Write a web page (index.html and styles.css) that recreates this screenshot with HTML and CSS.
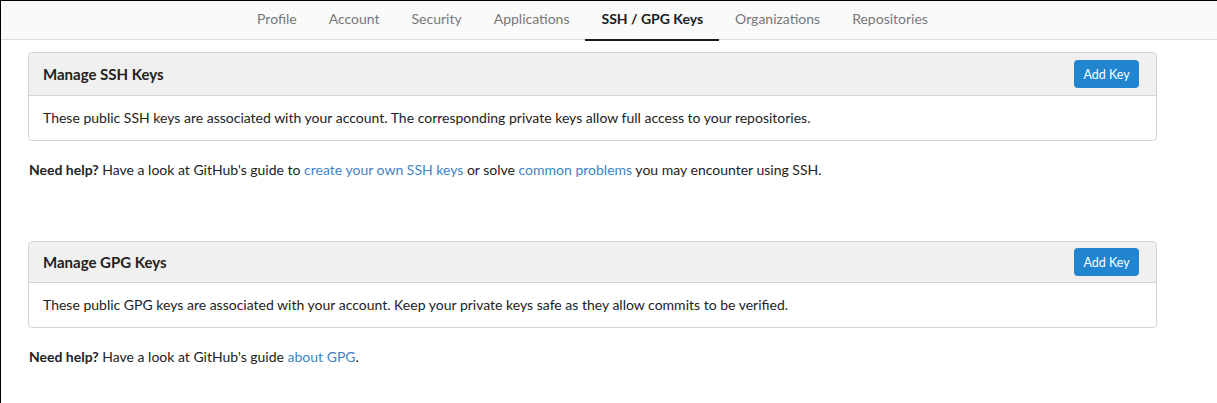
FILE: index.html
```html
<!DOCTYPE html>
<html lang="en">
<head>
<meta charset="utf-8">
<title>SSH / GPG Keys</title>
<link rel="stylesheet" href="styles.css">
</head>
<body>
<nav class="tabs">
  <div class="tabs-inner">
    <a class="tab">Profile</a>
    <a class="tab">Account</a>
    <a class="tab">Security</a>
    <a class="tab">Applications</a>
    <a class="tab active">SSH / GPG Keys</a>
    <a class="tab">Organizations</a>
    <a class="tab">Repositories</a>
  </div>
</nav>
<main class="container">
  <section class="panel panel-first">
    <div class="panel-header">
      <h4 class="panel-title">Manage SSH Keys</h4>
      <button class="btn">Add Key</button>
    </div>
    <div class="panel-body">These public SSH keys are associated with your account. The corresponding private keys allow full access to your repositories.</div>
  </section>
  <p class="help"><strong>Need help?</strong> Have a look at GitHub's guide to <a class="link">create your own SSH keys</a> or solve <a class="link">common problems</a> you may encounter using SSH.</p>

  <section class="panel panel-second">
    <div class="panel-header">
      <h4 class="panel-title">Manage GPG Keys</h4>
      <button class="btn">Add Key</button>
    </div>
    <div class="panel-body">These public GPG keys are associated with your account. Keep your private keys safe as they allow commits to be verified.</div>
  </section>
  <p class="help"><strong>Need help?</strong> Have a look at GitHub's guide <a class="link">about GPG</a>.</p>
</main>
</body>
</html>
```

FILE: styles.css
```css
* { box-sizing: border-box; }

html, body {
  height: 100%;
}

body {
  margin: 0;
  border-top: 1px solid #000;
  border-left: 1px solid #000;
  background: #fff;
  font-family: Lato, "Open Sans", sans-serif;
  font-size: 14px;
  color: #222;
}

.tabs {
  background: #fafafa;
  border-bottom: 1px solid #ddd;
  height: 39px;
}

.tabs-inner {
  margin-left: 27px;
  width: 1129px;
  display: flex;
  justify-content: center;
}

.tab {
  display: block;
  padding: 0 16px;
  height: 40px;
  line-height: 35px;
  color: #777;
  border-bottom: 2px solid transparent;
  text-decoration: none;
}

.tab.active {
  color: #1b1c1d;
  font-weight: 700;
  border-bottom-color: #1b1c1d;
}

.container {
  margin-left: 27px;
  width: 1129px;
}

.panel {
  border: 1px solid #d4d4d5;
  border-radius: 4px;
  background: #fff;
}

.panel-first { margin-top: 12px; }
.panel-second { margin-top: 61px; }

.panel-header {
  display: flex;
  align-items: center;
  justify-content: space-between;
  background: #f0f0f0;
  border-bottom: 1px solid #d4d4d5;
  border-radius: 4px 4px 0 0;
  padding: 7px 17px 7px 14px;
}

.panel-second .panel-header {
  padding-top: 6px;
  padding-bottom: 6px;
}

.panel-title {
  margin: 0;
  font-size: 15px;
  font-weight: 700;
  color: #222;
}

.btn {
  font-family: Lato, "Open Sans", sans-serif;
  font-size: 12.5px;
  height: 28px;
  width: 65px;
  padding: 0;
  border: 0;
  border-radius: 4px;
  background: #2185d0;
  color: #fff;
}

.panel-body {
  padding: 13px 14px;
  line-height: 18px;
}

.help {
  margin: 19px 0 0;
  padding-left: 1px;
  line-height: 20px;
}

.help strong { font-weight: 700; }

.link {
  color: #4183c4;
  text-decoration: none;
}
```
